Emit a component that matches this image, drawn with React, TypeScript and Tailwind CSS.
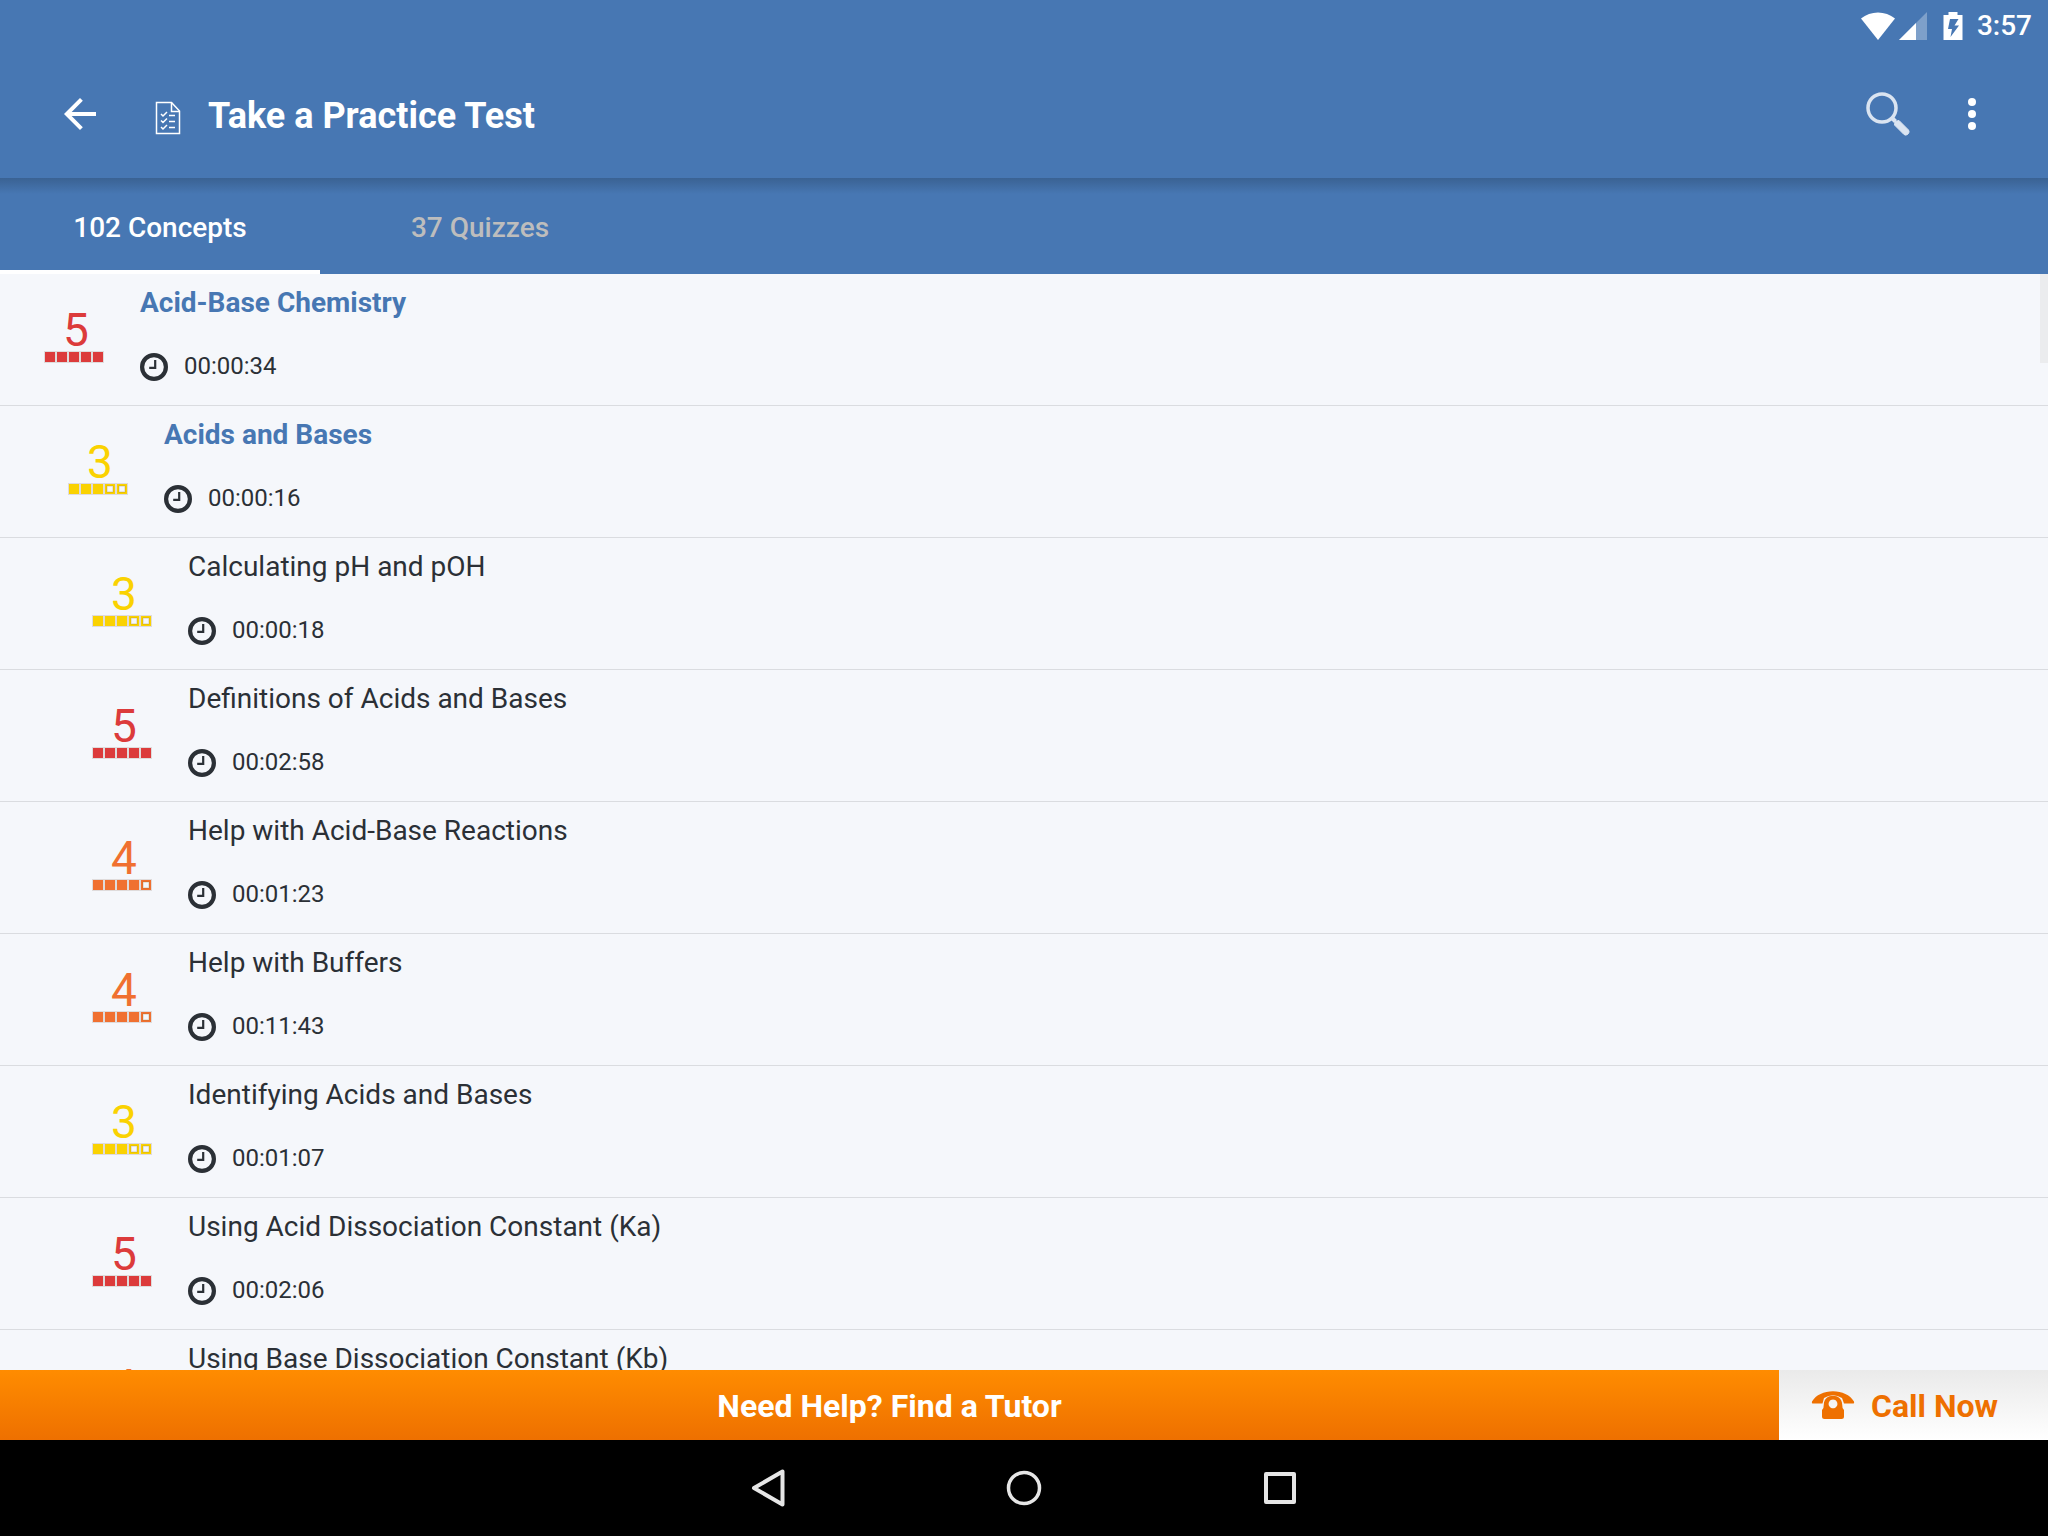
import React from "react";

type Concept = { title: string; time: string; level: number; depth: 0 | 1 | 2; group?: boolean };

const concepts: Concept[] = [
  { title: "Acid-Base Chemistry", time: "00:00:34", level: 5, depth: 0, group: true },
  { title: "Acids and Bases", time: "00:00:16", level: 3, depth: 1, group: true },
  { title: "Calculating pH and pOH", time: "00:00:18", level: 3, depth: 2 },
  { title: "Definitions of Acids and Bases", time: "00:02:58", level: 5, depth: 2 },
  { title: "Help with Acid-Base Reactions", time: "00:01:23", level: 4, depth: 2 },
  { title: "Help with Buffers", time: "00:11:43", level: 4, depth: 2 },
  { title: "Identifying Acids and Bases", time: "00:01:07", level: 3, depth: 2 },
  { title: "Using Acid Dissociation Constant (Ka)", time: "00:02:06", level: 5, depth: 2 },
  { title: "Using Base Dissociation Constant (Kb)", time: "00:01:34", level: 4, depth: 2 },
];

const indents = ["pl-11", "pl-[68px]", "pl-[92px]"];
const levelColors: Record<number, string> = {
  3: "text-[#fad201]",
  4: "text-[#f07030]",
  5: "text-[#dc3b3b]",
};

function LevelBadge({ level }: { level: number }) {
  return (
    <div className={`flex w-[60px] flex-col items-center ${levelColors[level]}`}>
      <span className="pl-1 text-[46px] leading-[42px]">{level}</span>
      <svg viewBox="0 0 60 12" className="h-3 w-[60px]" aria-hidden="true">
        {[0, 1, 2, 3, 4].map((i) => (
          <g key={i}>
            <rect x={i * 12 + 0.5} y={0.5} width={11} height={11} fill="none" stroke="#d9d3d3" strokeOpacity={0.8} />
            <rect x={i * 12 + 1} y={1} width={10} height={10} fill="currentColor" />
            {i >= level && (
              <rect x={i * 12 + 3} y={3} width={6} height={6} fill="#f5f7fb" stroke="#8a6a20" strokeOpacity={0.3} />
            )}
          </g>
        ))}
      </svg>
    </div>
  );
}

function ClockIcon() {
  return (
    <svg viewBox="0 0 28 28" className="size-7 text-[#2b3036]" fill="none" stroke="currentColor" aria-hidden="true">
      <circle cx="14" cy="14" r="11.9" strokeWidth="4.2" />
      <path d="M15.2 7v7.9H9.2" strokeWidth="2.2" />
    </svg>
  );
}

function ConceptRow({ concept }: { concept: Concept }) {
  return (
    <li className={`flex h-[132px] shrink-0 items-start gap-9 border-b border-[#dadce0] ${indents[concept.depth]}`}>
      <div className="pt-[35px]">
        <LevelBadge level={concept.level} />
      </div>
      <div className="flex flex-col gap-8 pt-[13px]">
        <a
          href="#concept"
          className={`text-[28px] leading-8 ${concept.group ? "font-bold text-[#4777b3]" : "text-[#2b3036]"}`}
        >
          {concept.title}
        </a>
        <div className="flex items-start gap-4 pt-[2px] text-[24px] leading-[26px] text-[#2b3036]">
          <ClockIcon />
          <time>{concept.time}</time>
        </div>
      </div>
    </li>
  );
}

function StatusBar() {
  return (
    <div className="flex h-12 items-center justify-end pt-1 pr-4 text-white">
      <svg viewBox="0 0 36 30" className="h-[30px] w-9" aria-hidden="true">
        <path d="M1 7.5C10.500-.5 25.500-.5 35 7.500L18 29z" fill="currentColor" />
      </svg>
      <svg viewBox="0 0 30 30" className="ml-[2px] h-[30px] w-[30px]" aria-hidden="true">
        <path d="M29 1v28H1z" fill="currentColor" fillOpacity="0.3" />
        <path d="M18 12v17H1z" fill="currentColor" />
      </svg>
      <svg viewBox="0 0 20 30" className="ml-[15px] h-[30px] w-5" aria-hidden="true">
        <path
          fillRule="evenodd"
          fill="currentColor"
          d="M5.500 1h9v3H19.500v25H.5V4H5.500zM7 8L5 18h4l-1.500 8L16 14.500h-4.500L15.500 8z"
        />
      </svg>
      <time className="ml-[14px] text-[28px] leading-8 font-medium">3:57</time>
    </div>
  );
}

function AppBar() {
  return (
    <div className="flex h-[130px] items-center pt-[2px] pr-[52px] pl-14 text-white">
      <button type="button" aria-label="Back">
        <svg viewBox="0 0 24 24" className="size-12" fill="currentColor">
          <path d="M20 11H7.830l5.590-5.590L12 4l-8 8 8 8 1.410-1.410L7.830 13H20z" />
        </svg>
      </button>
      <svg viewBox="0 0 26 34" className="mt-2 ml-[51px] h-[34px] w-[26px]" fill="none" stroke="currentColor" strokeWidth="1.500" aria-hidden="true">
        <path d="M1.500 1.500h15l8 8.500v22.500h-23z" />
        <path d="M16.500 1.500V10.500h8" />
        <path d="M6 13l2 2 4-4M6 19.500l2 2 4-4M6 26l2 2 4-4M14 14.500h6M14 20.500h6M14 26.500h6" />
      </svg>
      <h1 className="ml-[27px] pt-1 text-[36px] leading-10 font-bold">Take a Practice Test</h1>
      <button type="button" aria-label="Search" className="ml-auto">
        <svg viewBox="0 0 44 44" className="size-11 text-[#dae4f1]" fill="none" stroke="currentColor">
          <circle cx="16" cy="16" r="14" strokeWidth="3.500" />
          <path d="M25.500 25.500l4 4" strokeWidth="4" />
          <path d="M29 29.500l4-1 9.500 9.500q1.500 2-.5 4t-4 .5L28.500 33z" fill="currentColor" strokeWidth="1" />
        </svg>
      </button>
      <button type="button" aria-label="More options" className="ml-[38px]">
        <svg viewBox="0 0 48 48" className="size-12" fill="currentColor">
          <circle cx="24" cy="12" r="4" />
          <circle cx="24" cy="24" r="4" />
          <circle cx="24" cy="36" r="4" />
        </svg>
      </button>
    </div>
  );
}

export default function App() {
  return (
    <div className="flex h-screen w-full flex-col bg-[#f5f7fb] font-['Roboto',sans-serif]">
      <header className="bg-[#4777b3]">
        <StatusBar />
        <AppBar />
      </header>
      <nav role="tablist" className="relative flex h-24 shrink-0 bg-[#4777b3] text-[28px] leading-8 font-medium">
        <div className="pointer-events-none absolute inset-x-0 top-0 h-4 bg-linear-to-b from-[#3a6293] to-[#4777b3]" />
        <button type="button" role="tab" aria-selected="true" className="relative w-80 border-b-4 border-white pt-2 text-white">
          102 Concepts
        </button>
        <button type="button" role="tab" aria-selected="false" className="relative w-80 border-b-4 border-transparent pt-2 text-[#bdbdbd]">
          37 Quizzes
        </button>
      </nav>
      <main className="relative min-h-0 flex-1 overflow-hidden">
        <ul className="flex flex-col">
          {concepts.map((c) => (
            <ConceptRow key={c.title} concept={c} />
          ))}
        </ul>
        <div className="absolute top-0 right-0 h-[89px] w-2 bg-[#ebecee]" />
      </main>
      <div className="flex h-[70px] shrink-0 text-[32px] leading-9 font-bold">
        <button type="button" className="flex-1 bg-linear-to-b from-[#ff8c00] to-[#ee7000] pt-[2px] text-white">
          Need Help? Find a Tutor
        </button>
        <button type="button" className="flex w-[269px] items-center bg-linear-to-b from-[#eaeaea] to-white pl-8 text-[#ee7000]">
          <svg viewBox="0 0 44 30" className="h-[30px] w-11" fill="currentColor" aria-hidden="true">
            <path d="M1.500 13.500Q.5 13.500 1 11.500C5 5 13 1.300 22 1.300S39 5 43 11.500q.5 2-.5 2H33L31 8Q22 2.500 13 8L11.500 13.500z" />
            <path
              fillRule="evenodd"
              d="M11 20Q13 18 12.800 14.500C13 9 17 5.800 22 5.800S31 9 31.200 14.500Q31 18 33 20V26.500q0 2.500-2.500 2.500h-17Q11 29 11 26.500zM22 9.500a4.400 4.400 0 1 0 .01 0z"
            />
          </svg>
          <span className="ml-4 pt-[2px]">Call Now</span>
        </button>
      </div>
      <footer className="flex h-24 shrink-0 items-center justify-center gap-52 bg-black text-[#e6e6e6]">
        <button type="button" aria-label="Back">
          <svg viewBox="0 0 48 48" className="size-12" fill="none" stroke="currentColor" strokeWidth="4" strokeLinejoin="round">
            <path d="M38.500 7.500v33L10 24z" />
          </svg>
        </button>
        <button type="button" aria-label="Home">
          <svg viewBox="0 0 48 48" className="size-12" fill="none" stroke="currentColor" strokeWidth="3.500">
            <circle cx="24" cy="24" r="15.500" />
          </svg>
        </button>
        <button type="button" aria-label="Recent apps">
          <svg viewBox="0 0 48 48" className="size-12" fill="none" stroke="currentColor" strokeWidth="4" strokeLinejoin="round">
            <rect x="10" y="10" width="28" height="28" />
          </svg>
        </button>
      </footer>
    </div>
  );
}
